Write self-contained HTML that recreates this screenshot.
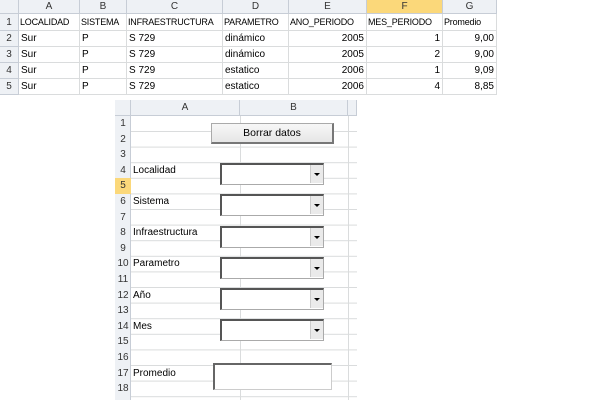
<!DOCTYPE html>
<html><head><meta charset="utf-8"><style>
body{margin:0;width:600px;height:407px;background:#fff;position:relative;overflow:hidden;font-family:"Liberation Sans",sans-serif;font-size:10px;color:#000}
.a{position:absolute;box-sizing:border-box;white-space:nowrap}
.hd{background:#eef1f5;border-right:1px solid #c7cdd6;border-bottom:1px solid #c7cdd6;color:#333;text-align:center;font-size:10px}
.c{border-right:1px solid #dadcdd;border-bottom:1px solid #dadcdd;padding:0 2px;line-height:16px;overflow:hidden}
.t{font-size:9px;letter-spacing:-0.2px;padding:0 1px}
.r{text-align:right}
.dd{position:absolute;box-sizing:border-box;width:104px;height:22px;border:1px solid #aaa;border-top:2px solid #555;border-left:2px solid #555;background:#fff}
.dd i{position:absolute;right:0;top:0;width:12px;height:18px;background:#eaeaea;border-left:1px solid #ccc}
.dd i:after{content:"";position:absolute;left:3px;top:8px;border-left:3px solid transparent;border-right:3px solid transparent;border-top:3px solid #000}
.l{position:absolute;left:133px;line-height:15.6px}
</style></head><body>
<div class="a hd" style="left:0;top:0;width:19px;height:14px"></div>
<div class="a hd" style="left:19px;top:0;width:61px;height:14px;line-height:13px">A</div>
<div class="a hd" style="left:80px;top:0;width:47px;height:14px;line-height:13px">B</div>
<div class="a hd" style="left:127px;top:0;width:96px;height:14px;line-height:13px">C</div>
<div class="a hd" style="left:223px;top:0;width:66px;height:14px;line-height:13px">D</div>
<div class="a hd" style="left:289px;top:0;width:78px;height:14px;line-height:13px">E</div>
<div class="a hd" style="left:367px;top:0;width:76px;height:14px;line-height:13px;background:#fbd87a">F</div>
<div class="a hd" style="left:443px;top:0;width:54px;height:14px;line-height:13px">G</div>
<div class="a hd" style="left:0;top:14px;width:19px;height:17px;line-height:17px">1</div>
<div class="a hd" style="left:0;top:31px;width:19px;height:16px;line-height:16px">2</div>
<div class="a hd" style="left:0;top:47px;width:19px;height:16px;line-height:16px">3</div>
<div class="a hd" style="left:0;top:63px;width:19px;height:16px;line-height:16px">4</div>
<div class="a hd" style="left:0;top:79px;width:19px;height:16px;line-height:16px">5</div>
<div class="a c t" style="left:19px;top:14px;width:61px;height:17px;line-height:17px">LOCALIDAD</div>
<div class="a c t" style="left:80px;top:14px;width:47px;height:17px;line-height:17px">SISTEMA</div>
<div class="a c t" style="left:127px;top:14px;width:96px;height:17px;line-height:17px">INFRAESTRUCTURA</div>
<div class="a c t" style="left:223px;top:14px;width:66px;height:17px;line-height:17px">PARAMETRO</div>
<div class="a c t" style="left:289px;top:14px;width:78px;height:17px;line-height:17px">ANO_PERIODO</div>
<div class="a c t" style="left:367px;top:14px;width:76px;height:17px;line-height:17px">MES_PERIODO</div>
<div class="a c t" style="left:443px;top:14px;width:54px;height:17px;line-height:17px">Promedio</div>

<div class="a c" style="left:19px;top:31px;width:61px;height:16px">Sur</div><div class="a c" style="left:80px;top:31px;width:47px;height:16px">P</div><div class="a c" style="left:127px;top:31px;width:96px;height:16px">S 729</div><div class="a c" style="left:223px;top:31px;width:66px;height:16px">dinámico</div><div class="a c r" style="left:289px;top:31px;width:78px;height:16px">2005</div><div class="a c r" style="left:367px;top:31px;width:76px;height:16px">1</div><div class="a c r" style="left:443px;top:31px;width:54px;height:16px">9,00</div>
<div class="a c" style="left:19px;top:47px;width:61px;height:16px">Sur</div><div class="a c" style="left:80px;top:47px;width:47px;height:16px">P</div><div class="a c" style="left:127px;top:47px;width:96px;height:16px">S 729</div><div class="a c" style="left:223px;top:47px;width:66px;height:16px">dinámico</div><div class="a c r" style="left:289px;top:47px;width:78px;height:16px">2005</div><div class="a c r" style="left:367px;top:47px;width:76px;height:16px">2</div><div class="a c r" style="left:443px;top:47px;width:54px;height:16px">9,00</div>
<div class="a c" style="left:19px;top:63px;width:61px;height:16px">Sur</div><div class="a c" style="left:80px;top:63px;width:47px;height:16px">P</div><div class="a c" style="left:127px;top:63px;width:96px;height:16px">S 729</div><div class="a c" style="left:223px;top:63px;width:66px;height:16px">estatico</div><div class="a c r" style="left:289px;top:63px;width:78px;height:16px">2006</div><div class="a c r" style="left:367px;top:63px;width:76px;height:16px">1</div><div class="a c r" style="left:443px;top:63px;width:54px;height:16px">9,09</div>
<div class="a c" style="left:19px;top:79px;width:61px;height:16px">Sur</div><div class="a c" style="left:80px;top:79px;width:47px;height:16px">P</div><div class="a c" style="left:127px;top:79px;width:96px;height:16px">S 729</div><div class="a c" style="left:223px;top:79px;width:66px;height:16px">estatico</div><div class="a c r" style="left:289px;top:79px;width:78px;height:16px">2006</div><div class="a c r" style="left:367px;top:79px;width:76px;height:16px">4</div><div class="a c r" style="left:443px;top:79px;width:54px;height:16px">8,85</div>

<div class="a hd" style="left:115px;top:100px;width:16px;height:16px"></div>
<div class="a hd" style="left:131px;top:100px;width:109px;height:16px;line-height:15px">A</div>
<div class="a hd" style="left:240px;top:100px;width:108px;height:16px;line-height:15px">B</div>
<div class="a hd" style="left:348px;top:100px;width:9px;height:16px"></div>
<div class="a" style="left:115px;top:116px;width:16px;height:284px;background:#eef1f5;border-right:1px solid #c7cdd6"></div>
<div class="a" style="left:240px;top:116px;width:1px;height:284px;background:#dadcdd"></div>
<div class="a" style="left:348px;top:116px;width:1px;height:284px;background:#dadcdd"></div>
<div class="a" style="left:131px;top:131px;width:226px;height:1px;background:#dadcdd;box-shadow:0 15.6px #dadcdd,0 31.2px #dadcdd,0 46.8px #dadcdd,0 62.4px #dadcdd,0 78px #dadcdd,0 93.6px #dadcdd,0 109.2px #dadcdd,0 124.8px #dadcdd,0 140.4px #dadcdd,0 156px #dadcdd,0 171.6px #dadcdd,0 187.2px #dadcdd,0 202.8px #dadcdd,0 218.4px #dadcdd,0 234px #dadcdd,0 249.6px #dadcdd,0 265.2px #dadcdd"></div>
<div class="a" style="left:115px;top:116px;width:16px;line-height:15.6px;text-align:center;color:#333;white-space:normal">1<br>2<br>3<br>4<br><span style="display:block;background:#fbd87a">5</span>6<br>7<br>8<br>9<br>10<br>11<br>12<br>13<br>14<br>15<br>16<br>17<br>18</div>
<div class="l" style="top:163px">Localidad</div>
<div class="l" style="top:194px">Sistema</div>
<div class="l" style="top:225px">Infraestructura</div>
<div class="l" style="top:256px">Parametro</div>
<div class="l" style="top:288px">Año</div>
<div class="l" style="top:319px">Mes</div>
<div class="l" style="top:366px">Promedio</div>
<div class="a" style="left:211px;top:123px;width:123px;height:21px;background:linear-gradient(#f7f7f7,#e6e6e6);border:1px solid #aaa;border-right:2px solid #777;border-bottom:2px solid #777;text-align:center;line-height:18px;font-size:10.5px">Borrar datos</div>
<div class="dd" style="left:220px;top:163px"><i></i></div>
<div class="dd" style="left:220px;top:194px"><i></i></div>
<div class="dd" style="left:220px;top:226px"><i></i></div>
<div class="dd" style="left:220px;top:257px"><i></i></div>
<div class="dd" style="left:220px;top:288px"><i></i></div>
<div class="dd" style="left:220px;top:319px"><i></i></div>
<div class="a" style="left:213px;top:363px;width:119px;height:27px;background:#fff;border:1px solid #ccc;border-top:2px solid #666;border-left:2px solid #666"></div>
</body></html>
